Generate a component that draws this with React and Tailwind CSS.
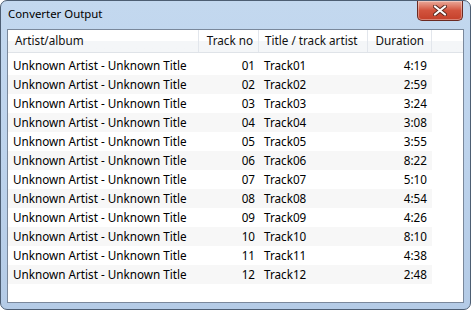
import React from "react";

const TRACKS = [
  ["01", "Track01", "4:19"],
  ["02", "Track02", "2:59"],
  ["03", "Track03", "3:24"],
  ["04", "Track04", "3:08"],
  ["05", "Track05", "3:55"],
  ["06", "Track06", "8:22"],
  ["07", "Track07", "5:10"],
  ["08", "Track08", "4:54"],
  ["09", "Track09", "4:26"],
  ["10", "Track10", "8:10"],
  ["11", "Track11", "4:38"],
  ["12", "Track12", "2:48"],
];

// Aero-style red close button
function CloseButton() {
  return (
    <div className="w-[46px] h-[20px] rounded-b-[5px] border border-t-0 border-[#6b2a22] bg-gradient-to-b from-[#e9a99a] via-[#d2533d] to-[#c4402a] flex items-center justify-center shadow-[inset_0_0_0_1px_rgba(255,255,255,0.35)]">
      <svg width="14" height="11" viewBox="0 0 14 11">
        <path d="M2 1.5 L12 9.5 M12 1.5 L2 9.5" stroke="#5a2a22" strokeWidth="4" strokeLinecap="round" />
        <path d="M2 1.5 L12 9.5 M12 1.5 L2 9.5" stroke="#ffffff" strokeWidth="2.2" strokeLinecap="round" />
      </svg>
    </div>
  );
}

function HeaderCell({ className, children }) {
  return (
    <div className={`h-full flex items-center border-r border-[#e2e6ec] ${className}`}>{children}</div>
  );
}

export default function App() {
  return (
    <div
      className="w-[471px] h-[310px] rounded-[7px] border border-[#4d5e73] bg-gradient-to-b from-[#c3d8ef] via-[#bdd3ec] to-[#b4cbe6] flex flex-col text-[11.7px] text-black overflow-hidden"
      style={{ fontFamily: '"Noto Sans", "Liberation Sans", sans-serif' }}
    >
      {/* Title bar */}
      <div className="h-[28px] flex items-start justify-between pl-[7px] pr-[7px] shrink-0">
        <span className="mt-[5px] leading-[16px] text-[11.4px]">Converter Output</span>
        <CloseButton />
      </div>

      {/* Client area */}
      <div className="flex-1 px-[6px] pb-[6px] flex">
        <div className="flex-1 border border-[#7a889b] bg-white flex flex-col">
          {/* Column header */}
          <div className="h-[23px] flex border-b border-[#dfe3e8] bg-gradient-to-b from-white from-50% to-[#f4f6f8] to-50% text-[#111]">
            <HeaderCell className="w-[191px] pl-[7px]">Artist/album</HeaderCell>
            <HeaderCell className="w-[60px] justify-end pr-[5px]">Track no</HeaderCell>
            <HeaderCell className="w-[109px] pl-[6px]">Title / track artist</HeaderCell>
            <HeaderCell className="w-[64px] justify-end pr-[7px]">Duration</HeaderCell>
            <div className="flex-1" />
          </div>

          {/* Rows */}
          <div className="pt-[3px] flex flex-col">
            {TRACKS.map(([no, title, dur], i) => (
              <div
                key={no}
                className={`w-[424px] h-[19px] flex items-center ${i % 2 === 1 ? "bg-[#f7f7f7]" : ""}`}
              >
                <div className="w-[191px] pl-[5px] whitespace-nowrap">Unknown Artist - Unknown Title</div>
                <div className="w-[60px] text-right pr-[4px]">{no}</div>
                <div className="w-[109px] pl-[5px]">{title}</div>
                <div className="w-[64px] text-right pr-[5px]">{dur}</div>
              </div>
            ))}
          </div>
        </div>
      </div>
    </div>
  );
}
